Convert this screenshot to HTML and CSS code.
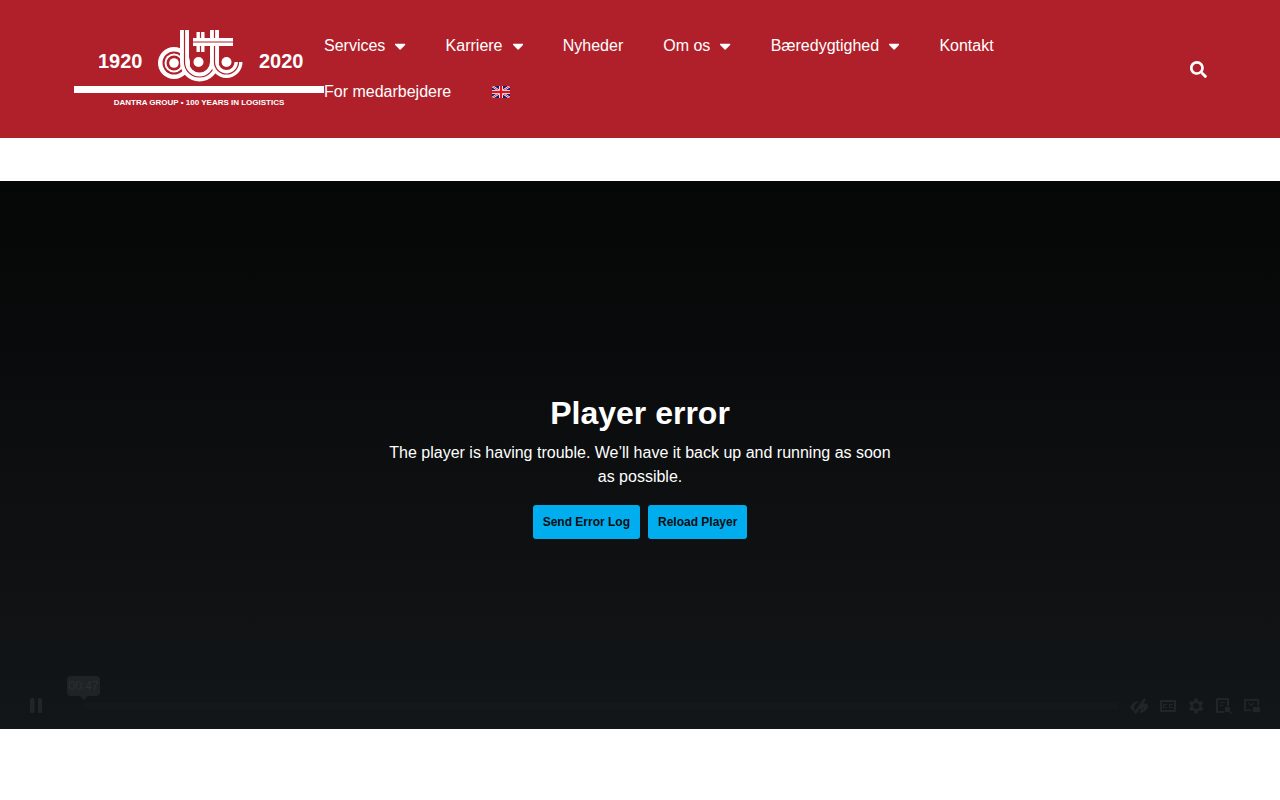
FILE: index.html
```html
<!DOCTYPE html>
<html lang="da">
<head>
<meta charset="utf-8">
<title>Dantra Group</title>
<link rel="stylesheet" href="styles.css">
</head>
<body>
<header class="site-header">
  <a class="logo" href="#">
    <svg class="logo-svg" width="250" height="88" viewBox="74 25 250 88">
      <text class="logo-year" x="98" y="68">1920</text>
      <text class="logo-year" x="259" y="68">2020</text>
      <circle class="m-white" cx="174" cy="63" r="16"/>
      <circle class="m-red" cx="174" cy="63" r="11.500"/>
      <circle class="m-white" cx="174" cy="63" r="9.500"/>
      <circle class="m-red" cx="174" cy="63" r="7.500"/>
      <circle class="m-white" cx="174" cy="63" r="4.800"/>
      <path class="m-band" d="M184.500 30V62a15 15 0 0 0 30 0V30"/>
      <path class="m-line" d="M184.500 30V62a15 15 0 0 0 30 0V30"/>
      <path class="m-band-sm" d="M214.500 62a12 12 0 0 0 24 0"/>
      <path class="m-line" d="M214.500 62a12 12 0 0 0 24 0"/>
      <circle class="m-red" cx="199" cy="62" r="9"/>
      <circle class="m-white" cx="198.500" cy="62" r="5"/>
      <circle class="m-white" cx="226.500" cy="62" r="5"/>
      <path class="m-band-sm" d="M200.500 32V52"/>
      <path class="m-line" d="M200.500 32V52"/>
      <path class="m-band-sm" d="M193 42H233"/>
      <path class="m-line" d="M193 42H233"/>
      <rect x="74" y="86" width="250" height="7" fill="#fff"/>
      <text class="logo-tag" x="199" y="105" text-anchor="middle">DANTRA GROUP • 100 YEARS IN LOGISTICS</text>
    </svg>
  </a>
  <nav class="main-nav">
    <a href="#" class="nav-item">Services <svg class="caret" viewBox="14 0 292 512"><path d="M31.300 192h257.300c17.800 0 26.700 21.500 14.100 34.100L174.100 354.800c-7.800 7.800-20.500 7.800-28.300 0L17.200 226.100C4.600 213.500 13.500 192 31.300 192z"/></svg></a>
    <a href="#" class="nav-item">Karriere <svg class="caret" viewBox="14 0 292 512"><path d="M31.300 192h257.300c17.800 0 26.700 21.500 14.100 34.100L174.100 354.800c-7.800 7.800-20.500 7.800-28.300 0L17.200 226.100C4.600 213.500 13.500 192 31.300 192z"/></svg></a>
    <a href="#" class="nav-item">Nyheder</a>
    <a href="#" class="nav-item">Om os <svg class="caret" viewBox="14 0 292 512"><path d="M31.300 192h257.300c17.800 0 26.700 21.500 14.100 34.100L174.100 354.800c-7.800 7.800-20.500 7.800-28.300 0L17.200 226.100C4.600 213.500 13.500 192 31.300 192z"/></svg></a>
    <a href="#" class="nav-item">Bæredygtighed <svg class="caret" viewBox="14 0 292 512"><path d="M31.300 192h257.300c17.800 0 26.700 21.500 14.100 34.100L174.100 354.800c-7.800 7.800-20.500 7.800-28.300 0L17.200 226.100C4.600 213.500 13.500 192 31.300 192z"/></svg></a>
    <a href="#" class="nav-item">Kontakt</a>
    <a href="#" class="nav-item">For medarbejdere</a>
    <a href="#" class="nav-item">
      <svg class="flag" viewBox="0 0 18 12">
        <rect width="18" height="12" fill="#10206e"/>
        <path d="M0 0L18 12M18 0L0 12" stroke="#fff" stroke-width="2.200"/>
        <path d="M0 0L18 12M18 0L0 12" stroke="#e01020" stroke-width="0.900"/>
        <path d="M9 0V12M0 6H18" stroke="#fff" stroke-width="4"/>
        <path d="M9 0V12M0 6H18" stroke="#e01020" stroke-width="2.400"/>
      </svg>
    </a>
  </nav>
  <a class="search" href="#" aria-label="Søg">
    <svg class="search-icon" viewBox="0 0 512 512"><path d="M505 442.700L405.300 343c-4.500-4.500-10.600-7-17-7H372c27.600-35.300 44-79.700 44-128C416 93.100 322.900 0 208 0S0 93.100 0 208s93.100 208 208 208c48.300 0 92.700-16.400 128-44v16.300c0 6.400 2.500 12.500 7 17l99.700 99.700c9.400 9.400 24.600 9.400 33.900 0l28.300-28.300c9.400-9.400 9.400-24.600.1-34zM208 336c-70.700 0-128-57.200-128-128 0-70.700 57.200-128 128-128 70.700 0 128 57.200 128 128 0 70.700-57.200 128-128 128z"/></svg>
  </a>
</header>

<section class="player">
  <div class="error">
    <h1 class="error-title">Player error</h1>
    <p class="error-text">The player is having trouble. We’ll have it back up and running as soon as possible.</p>
    <div class="error-actions">
      <button class="btn">Send Error Log</button>
      <button class="btn">Reload Player</button>
    </div>
  </div>
  <div class="controls">
    <svg class="ctl pause" viewBox="0 0 12 15"><rect width="4.500" height="15" rx="1.500"/><rect x="8" width="4" height="15" rx="1.500"/></svg>
    <div class="track"><span class="time">00:47</span></div>
    <div class="ctl-group">
      <svg class="ctl ctl-wide" viewBox="0 0 18 16"><path d="M0 9c2-4 5-6 9-6l-3 3-2 2 1 6c-2-1-4-3-5-5zM14 0l2 1.500L6 16l-2-1.500zM12 5l5 1c1 1 1 2 1 3-1 3-5 6-9 6l2-3c2 0 3-2 3-3l-3 3-1-1z"/></svg>
      <svg class="ctl" viewBox="0 0 16 16"><path fill-rule="evenodd" d="M1 2h14a1 1 0 0 1 1 1v10a1 1 0 0 1-1 1H1a1 1 0 0 1-1-1V3a1 1 0 0 1 1-1zm1 2v8h12V4zM3 6h4v1H4v2h3v1H3zM9 6h4v1h-3v2h3v1H9z"/></svg>
      <svg class="ctl" viewBox="4 2.500 18 19"><path d="M19.400 13c.1-.3.100-.7.100-1s0-.7-.1-1l2.100-1.600-2-3.500-2.500 1a8 8 0 0 0-1.700-1L15.300 3h-4l-.4 2.900c-.6.200-1.200.6-1.700 1l-2.500-1-2 3.500L6.800 11c-.1.300-.1.700-.1 1s0 .7.100 1l-2.100 1.600 2 3.500 2.500-1c.5.400 1.100.7 1.700 1l.4 2.900h4l.4-2.900c.6-.3 1.200-.6 1.700-1l2.500 1 2-3.500zM13.300 15.500a3.500 3.500 0 1 1 0-7 3.500 3.500 0 0 1 0 7z"/></svg>
      <svg class="ctl" viewBox="0 0 16 16"><path fill-rule="evenodd" d="M1 0h11a1 1 0 0 1 1 1v7h-2V2H2v11h6v2H1a1 1 0 0 1-1-1V1a1 1 0 0 1 1-1zM4 4h5v1H4zM4 7h3v1H4zM9 9h5v5H9zM14 13l2 2-1 1-2-2z"/></svg>
      <svg class="ctl" viewBox="0 0 18 16"><path fill-rule="evenodd" d="M1 0h15a1 1 0 0 1 1 1v7h-2V2H2v10h6v2H1a1 1 0 0 1-1-1V1a1 1 0 0 1 1-1zM10 9h8v6h-8zM5 4l3 2 3-2v1.500L8 8 5 5.500z"/></svg>
    </div>
  </div>
</section>
</body>
</html>
```
FILE: styles.css
```css
* { box-sizing: border-box; }
html, body { margin: 0; padding: 0; }
body { background: #fff; font-family: "Liberation Sans", Arial, sans-serif; height: 800px; overflow: hidden; }

.site-header {
  display: flex;
  align-items: center;
  height: 138px;
  padding: 0 73px 0 74px;
  background: #b0202a;
}
.logo { display: block; flex: 0 0 250px; height: 88px; }
.logo-svg { display: block; }
.logo-year { font: bold 20px "Liberation Sans", Arial, sans-serif; fill: #fff; }
.logo-tag { font: bold 8px "Liberation Sans", Arial, sans-serif; fill: #fff; }
.m-white { fill: #fff; }
.m-red { fill: #b0202a; }
.m-band { fill: none; stroke: #fff; stroke-width: 9; }
.m-band-sm { fill: none; stroke: #fff; stroke-width: 8; }
.m-line { fill: none; stroke: #b0202a; stroke-width: 1.200; }

.main-nav {
  display: flex;
  flex-wrap: wrap;
  flex: 0 0 800px;
  column-gap: 40px;
}
.nav-item {
  display: flex;
  align-items: center;
  gap: 10px;
  height: 46px;
  color: #fff;
  font-size: 16px;
  text-decoration: none;
  white-space: nowrap;
}
.caret { width: 10.250px; height: 18px; fill: #fff; }
.flag { display: block; width: 18px; height: 12px; margin-left: 1px; }

.search { margin-left: auto; display: block; height: 17px; }
.search-icon { display: block; width: 17px; height: 17px; fill: #fff; }

.player {
  position: relative;
  display: flex;
  justify-content: center;
  align-items: center;
  height: 548px;
  margin-top: 43px;
  padding-top: 23px;
  background: linear-gradient(#050606, #131618);
  color: #fff;
  text-align: center;
}
.error { width: 510px; }
.error-title { margin: 0 0 9px; font-size: 32px; line-height: 38px; font-weight: bold; }
.error-text { margin: 0 0 16px; font-size: 16px; line-height: 24px; }
.error-actions { display: flex; justify-content: center; gap: 8px; }
.btn {
  height: 34px;
  padding: 0 10px;
  border: 0;
  border-radius: 3px;
  background: #00adef;
  color: #0a0d10;
  font: bold 12px "Liberation Sans", Arial, sans-serif;
}

.controls {
  position: absolute;
  left: 30px;
  right: 20px;
  bottom: 16px;
  display: flex;
  align-items: center;
  height: 15px;
}
.ctl { display: block; width: 16px; height: 16px; fill: #222528; }
.ctl-wide { width: 18px; }
.pause { width: 12px; height: 15px; }
.track {
  position: relative;
  flex: 1;
  height: 6px;
  margin: 0 12px 0 42px;
  background: #15181a;
}
.time {
  position: absolute;
  left: -17px;
  top: -27px;
  width: 33px;
  height: 20px;
  border-radius: 4px;
  background: #202325;
  color: #2c2f31;
  font-size: 12px;
  line-height: 20px;
  text-align: center;
}
.time::after {
  content: "";
  position: absolute;
  left: 13px;
  bottom: -4px;
  border: 4px solid transparent;
  border-bottom: 0;
  border-top-color: #202325;
}
.ctl-group { display: flex; gap: 12px; }
```
